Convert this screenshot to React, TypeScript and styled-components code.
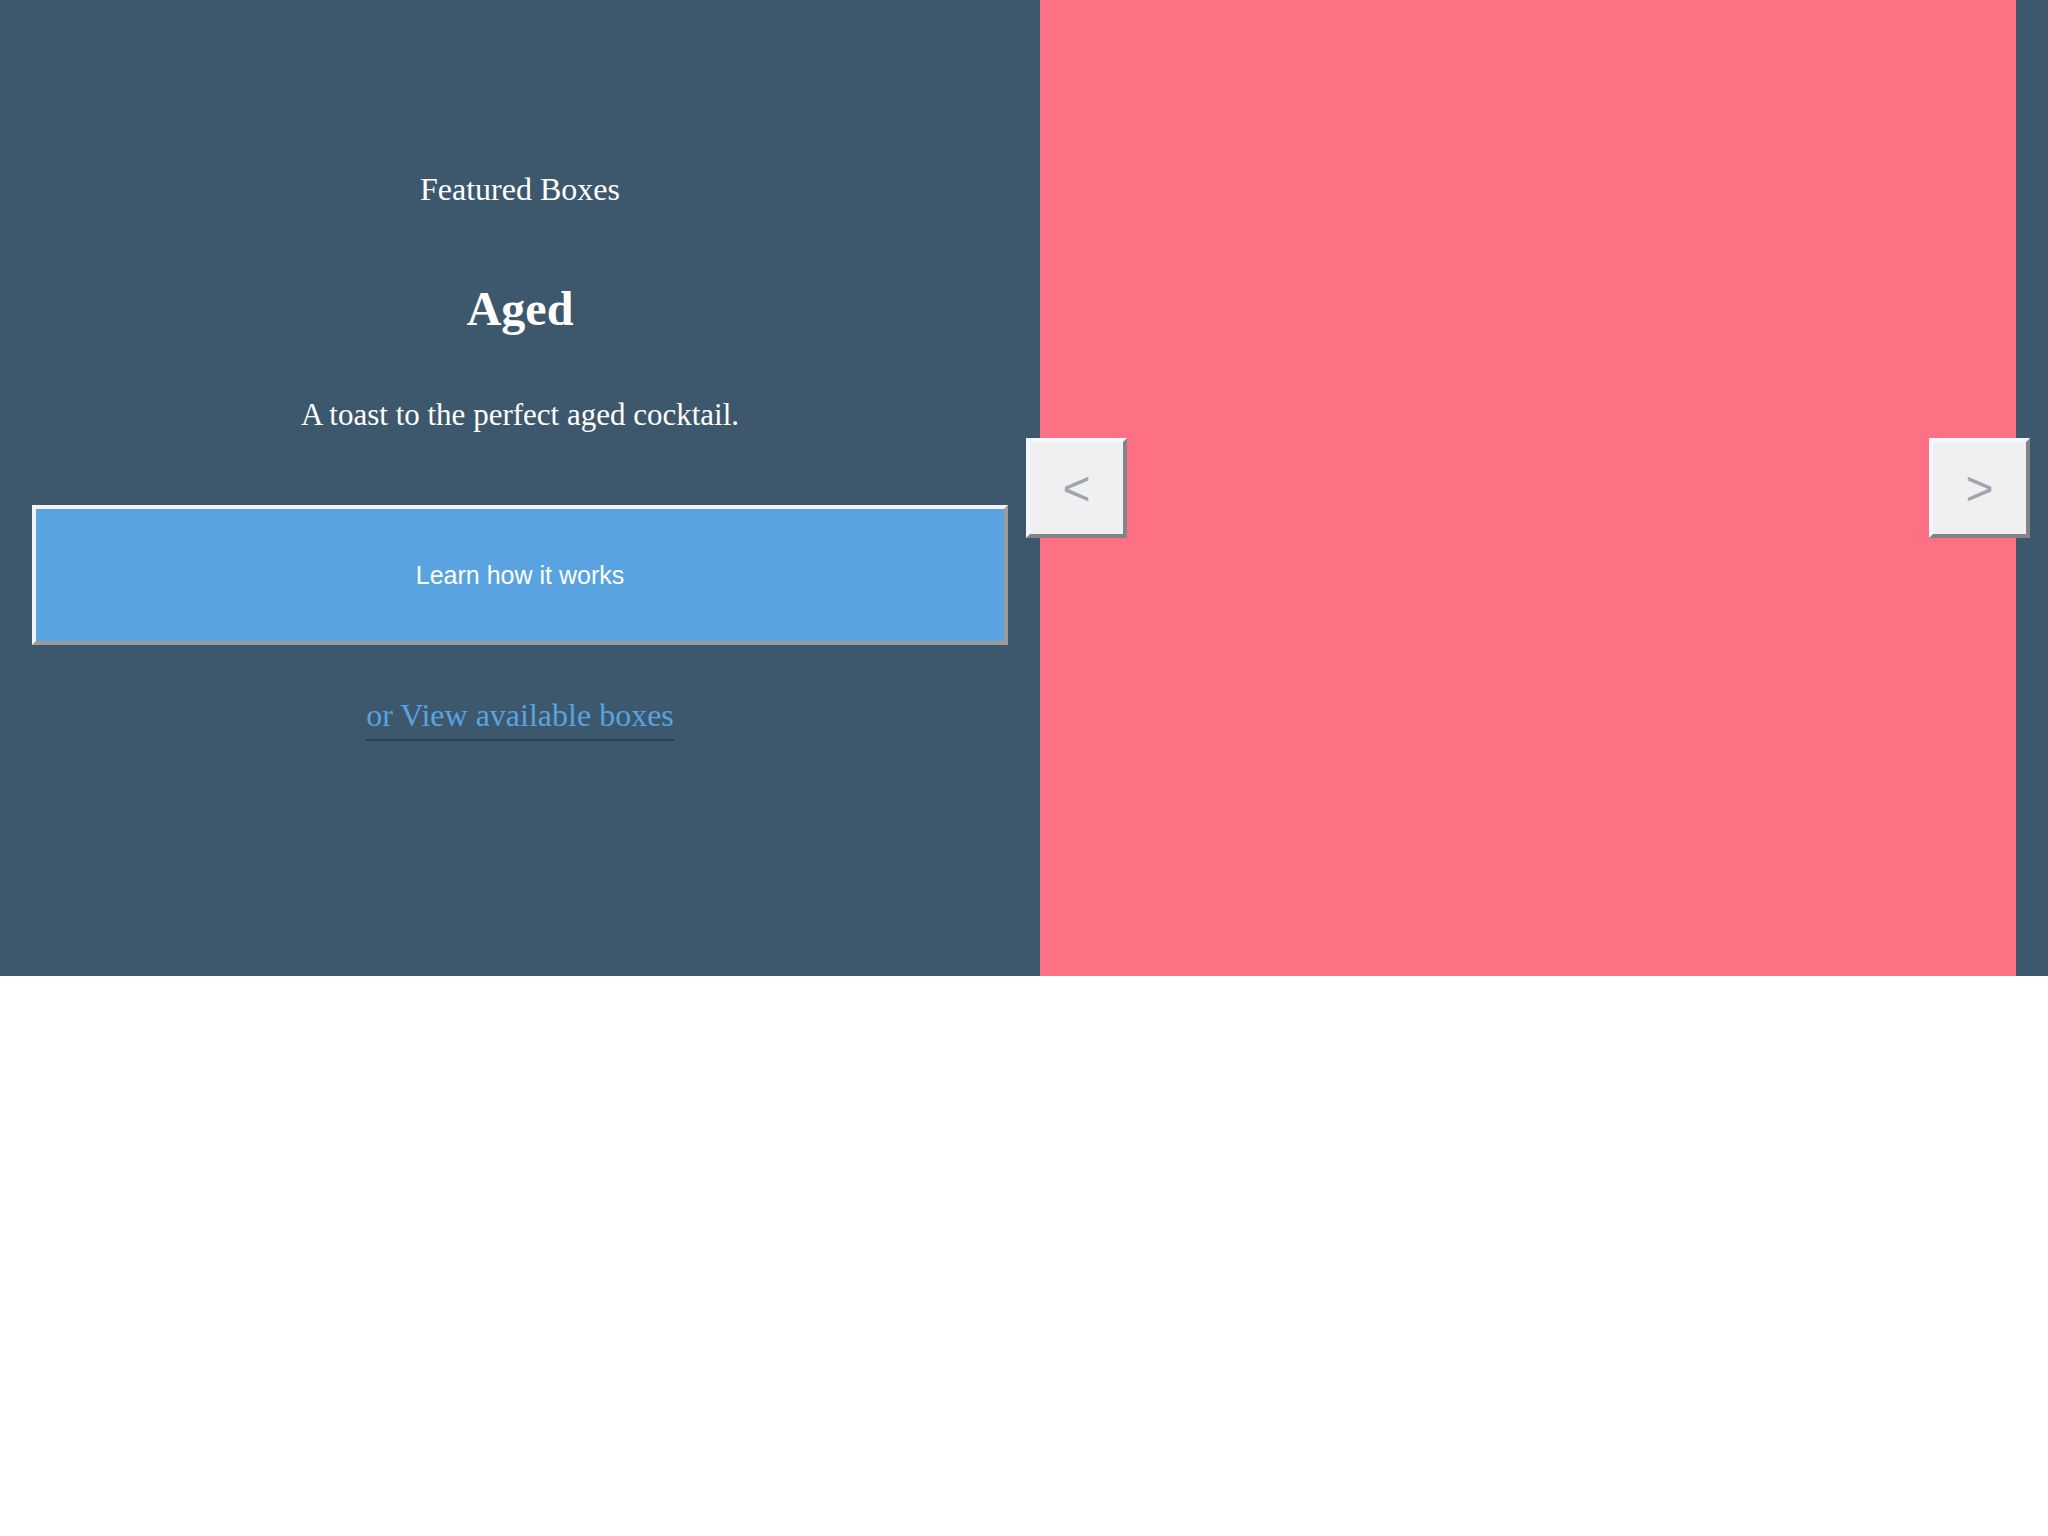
import { useState } from "react";
import styled, { createGlobalStyle } from "styled-components";

const GlobalStyle = createGlobalStyle`
  *, *::before, *::after { box-sizing: border-box; }
  body {
    margin: 0;
    background: #ffffff;
    font-family: "Liberation Serif", "Times New Roman", serif;
    font-size: 32px;
  }
`;

const Hero = styled.main`
  display: grid;
  grid-template-columns: 1fr 1fr;
  column-gap: 32px;
  padding: 0 32px;
  background: #3d586c;
  color: #ffffff;
`;

const Intro = styled.section`
  display: flex;
  flex-direction: column;
  align-items: center;
  justify-content: center;
  padding-bottom: 70px;
  text-align: center;
`;

const Text = styled.p<{ $size?: number }>`
  margin: 0 0 66px;
  font-size: ${({ $size = 32 }) => $size}px;
  line-height: 48px;
`;

const Title = styled.h1`
  margin: 0 0 52px;
  font-size: 48px;
  line-height: 60px;
`;

const PrimaryButton = styled.button`
  align-self: stretch;
  height: 140px;
  margin-bottom: 48px;
  border: 4px solid;
  border-color: #f3f2f4 #9b9b9b #9b9b9b #f3f2f4;
  background: #58a3e0;
  color: #ffffff;
  font: 25px "Liberation Sans", Arial, sans-serif;
  cursor: pointer;
`;

const BoxesLink = styled.a`
  padding-bottom: 2px;
  border-bottom: 2px solid #2d4052;
  color: #58a3e0;
  line-height: 44px;
  text-decoration: none;
`;

const Carousel = styled.section<{ $color: string }>`
  position: relative;
  aspect-ratio: 1;
  background: ${({ $color }) => $color};
`;

const NavButton = styled.button<{ $side: "left" | "right" }>`
  position: absolute;
  top: 50%;
  ${({ $side }) => $side}: -14px;
  width: 101px;
  height: 100px;
  transform: translateY(-50%);
  border: 4px solid;
  border-color: #f3f7ff #828487 #828487 #f3f7ff;
  background: #f0f0f0;
  color: #9fa6b2;
  font: 48px "Liberation Sans", Arial, sans-serif;
  cursor: pointer;
`;

const slides = [
  { title: "Aged", text: "A toast to the perfect aged cocktail.", color: "#fe7185" },
];

export default function App() {
  const [index, setIndex] = useState(0);
  const slide = slides[index];
  const move = (step: number) =>
    setIndex((index + step + slides.length) % slides.length);

  return (
    <>
      <GlobalStyle />
      <Hero>
        <Intro>
          <Text>Featured Boxes</Text>
          <Title>{slide.title}</Title>
          <Text $size={31}>{slide.text}</Text>
          <PrimaryButton type="button">Learn how it works</PrimaryButton>
          <BoxesLink href="#boxes">or View available boxes</BoxesLink>
        </Intro>
        <Carousel $color={slide.color}>
          <NavButton type="button" $side="left" onClick={() => move(-1)}>
            &lt;
          </NavButton>
          <NavButton type="button" $side="right" onClick={() => move(1)}>
            &gt;
          </NavButton>
        </Carousel>
      </Hero>
    </>
  );
}
